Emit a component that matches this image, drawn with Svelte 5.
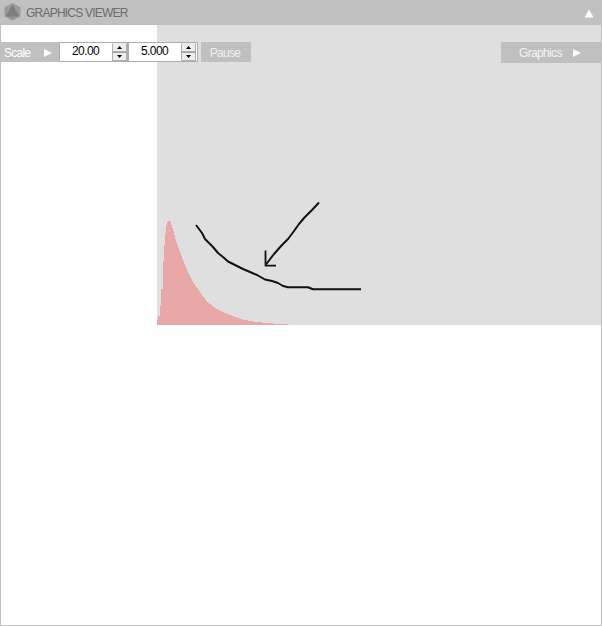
<script lang="ts">
    let scaleX = "20.00";
    let scaleY = "5.000";

    // top edge of the histogram, in canvas coordinates
    const histogram = [
        [0, 300], [1, 291], [3, 291], [3, 280], [4, 280], [4, 264], [6, 264],
        [6, 245], [7, 228], [8, 213], [9, 203], [10, 197], [11, 196], [13, 196],
        [14, 198], [16, 204], [18, 212], [23, 227], [28, 240], [32, 249],
        [36, 257], [43, 267], [50, 277], [60, 284], [68, 288], [76, 291],
        [86, 294.5], [96, 296.5], [113, 298.4], [131, 299], [131, 300],
    ];

    const points = histogram.map((p) => p.join(",")).join(" ");
</script>

<div class="viewer">
    <header class="titlebar">
        <svg class="logo" width="17" height="18" viewBox="0 0 17 18">
            <polygon points="8.5,0 16.5,4.3 16.5,13.2 8.5,17.6 0.5,13.2 0.5,4.3" fill="#999" />
            <polygon points="8.5,1.5 15.5,13.5 1.5,13.5" fill="#7e7e7e" />
        </svg>
        <span class="title">GRAPHICS VIEWER</span>
        <svg class="collapse" width="10" height="9" viewBox="0 0 10 9">
            <polygon points="5,0.5 9.5,8.5 0.5,8.5" fill="#fff" />
        </svg>
    </header>

    <svg class="canvas" width="444" height="300" viewBox="0 0 444 300">
        <polygon {points} fill="#e8a8a8" shape-rendering="crispEdges" />
        <g fill="none" stroke="#111" stroke-width="2" stroke-linejoin="round">
            <path
                d="M39 200 L42 204 L45 208 L48 214 L52 218 L56 222 L61 228 L66 232 L71 236.500 L78 240 L86 244 L93 247 L100 250 L108 254.500 L115 256 L121 258 L126 261 L131 262.200 L151 262.200 L156 264.200 L204 264.200"
            />
            <path d="M162 177.500 L155 185 L147 193 L142 199 L137 206 L131 214 L125 220 L117 229 L109 239.500" />
            <path d="M108.500 225.500 V240.700 H119" stroke-width="1.800" />
        </g>
    </svg>

    <div class="toolbar">
        <button class="scale">
            <span>Scale</span>
            <svg width="8" height="8" viewBox="0 0 8 8"><polygon points="0,0 8,4 0,8" fill="#fff" /></svg>
        </button>
        {#each [scaleX, scaleY] as value, i}
            <div class="spinner" class:second={i === 1}>
                <span class="value">{value}</span>
                <div class="arrows">
                    <span><svg width="5" height="3" viewBox="0 0 5 3"><polygon points="2.5,0 5,3 0,3" /></svg></span>
                    <span><svg width="5" height="3" viewBox="0 0 5 3"><polygon points="0,0 5,0 2.5,3" /></svg></span>
                </div>
            </div>
        {/each}
        <button class="pause"><span>Pause</span></button>
        <button class="graphics">
            <span>Graphics</span>
            <svg width="8" height="8" viewBox="0 0 8 8"><polygon points="0,0 8,4 0,8" fill="#f8f8f8" /></svg>
        </button>
    </div>
</div>

<style>
    .viewer {
        position: relative;
        box-sizing: border-box;
        width: 602px;
        height: 626px;
        border: 1px solid #c0c0c0;
        border-top: 0;
        background: #fff;
        font-family: "Liberation Sans", Arial, sans-serif;
        font-size: 12px;
        overflow: hidden;
    }

    .titlebar {
        display: flex;
        align-items: center;
        height: 25px;
        padding: 0 7px 0 3px;
        background: #c0c0c0;
    }

    .logo {
        margin-top: -1px;
    }

    .title {
        margin-left: 5px;
        color: #6c6c6c;
        font-size: 12px;
        letter-spacing: -0.78px;
        white-space: nowrap;
    }

    .collapse {
        margin-left: auto;
        margin-top: 1px;
    }

    .canvas {
        display: block;
        margin-left: auto;
        background: #dfdfdf;
    }

    /* floats over the canvas */
    .toolbar {
        position: absolute;
        top: 42px;
        left: -1px;
        right: -1px;
        display: flex;
        align-items: flex-start;
    }

    button {
        display: flex;
        align-items: center;
        box-sizing: border-box;
        height: 20px;
        border: 0;
        padding: 2px 0 0;
        background: #c0c0c0;
        color: #fff;
        font: inherit;
        letter-spacing: -0.75px;
    }

    .scale {
        width: 59px;
        padding-left: 4px;
    }

    .scale svg {
        margin-left: auto;
        margin-right: 7px;
    }

    .spinner {
        display: flex;
        box-sizing: border-box;
        width: 69px;
        height: 20px;
        border: 1px solid #abadb3;
        background: #fff;
    }

    .spinner.second {
        width: 70px;
    }

    .value {
        flex: 1;
        padding-left: 12px;
        color: #000;
        line-height: 17px;
        letter-spacing: -0.6px;
    }

    .arrows {
        display: flex;
        flex-direction: column;
        width: 15px;
    }

    .second .arrows {
        margin-right: 1px;
    }

    .arrows span {
        display: flex;
        flex: 1;
        align-items: center;
        justify-content: center;
        border: 1px solid #b0b0b0;
        background: #eee;
    }

    .arrows span + span {
        border-top-color: #a0a0a0;
    }

    .arrows span:first-child {
        border-top-color: #eee;
    }

    .pause {
        justify-content: center;
        width: 50px;
        margin-left: 3px;
        padding-right: 2px;
        color: #f0f0f0;
    }

    .graphics {
        width: 101px;
        height: 21px;
        margin-left: auto;
        padding: 0 0 0 18px;
        color: #f4f4f4;
        letter-spacing: -0.65px;
    }

    .graphics svg {
        margin-left: 11px;
    }
</style>
